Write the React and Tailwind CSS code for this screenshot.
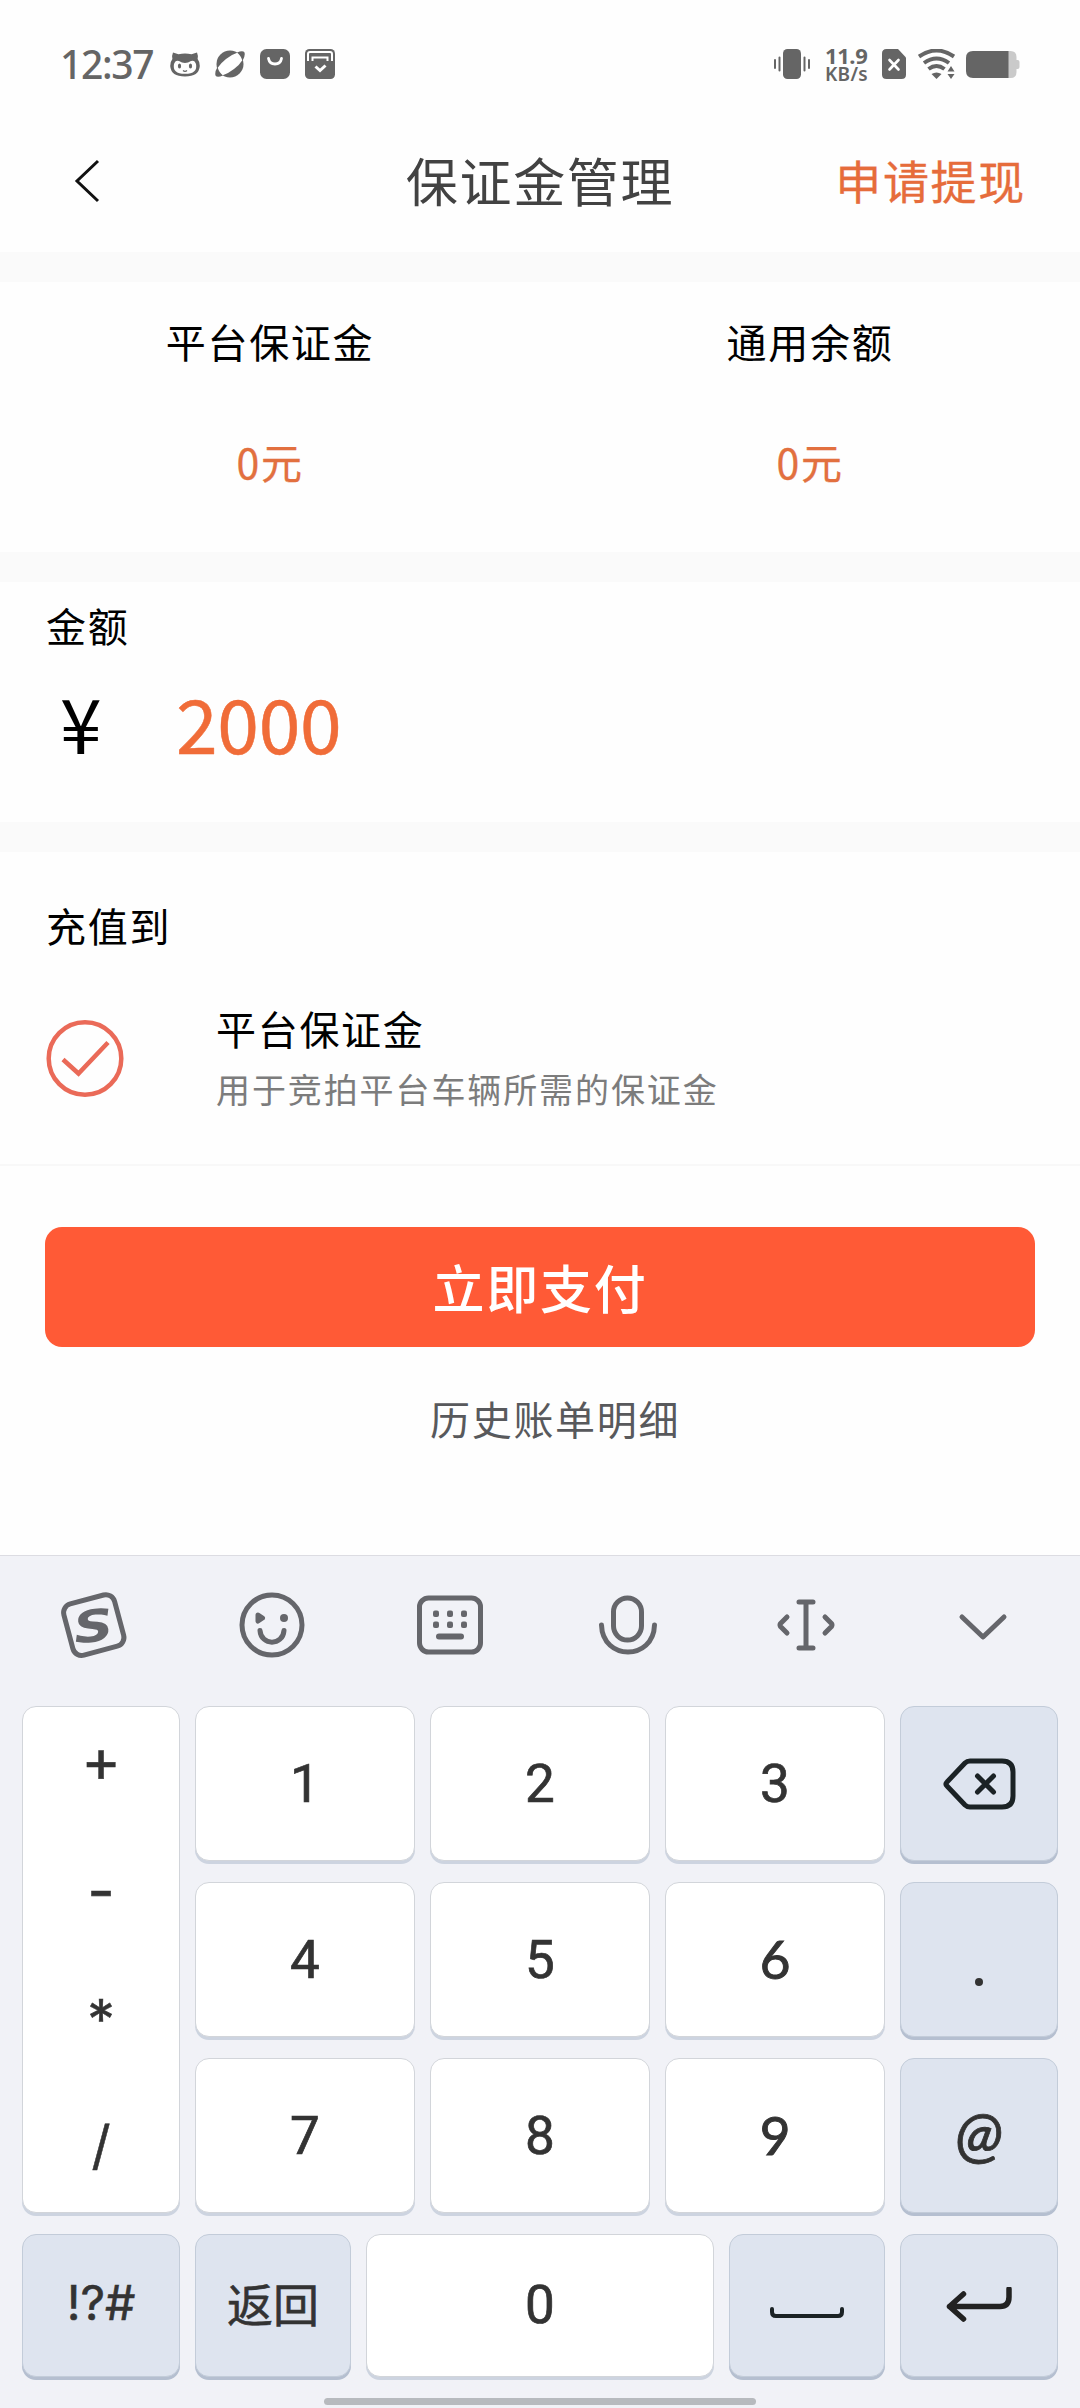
import { useState } from "react";

const balances = [
  { label: "平台保证金", value: "0元" },
  { label: "通用余额", value: "0元" },
];

const operators = [
  { label: "+", className: "text-[60px] pb-[18px]" },
  { label: "-", className: "text-[60px] pb-[8px]" },
  { label: "*", className: "text-[55px]" },
  { label: "/", className: "text-[53px] pt-[2px]" },
];

const StatusBar = () => (
  <div className="flex h-[128px] items-center justify-between pl-[60px] pr-[60px] text-[#656565]">
    <div className="flex items-center">
      <span className="w-[110px] pb-[2px] font-['Noto_Sans'] text-[39px] leading-none font-medium tracking-[-1.3px]">12:37</span>
      <svg width="30" height="30" viewBox="0 0 30 30" className="mr-[15px]">
        <path d="M3 3.5 8.500 5.200Q15 3.600 21.500 5.200L27 3.500Q28.500 7 27.600 10Q30 13 29.800 17Q29 27.500 15 27.500Q1 27.500 .2 17Q0 13 2.400 10Q1.500 7 3 3.500Z" fill="currentColor" />
        <path d="M4 15Q5.500 10.500 9 12Q15 16 21 12Q24.500 10.500 26 15Q28 24.800 15 24.800Q2 24.800 4 15Z" fill="#fff" />
        <ellipse cx="9.500" cy="17" rx="1.600" ry="2.600" fill="currentColor" />
        <ellipse cx="20.500" cy="17" rx="1.600" ry="2.600" fill="currentColor" />
        <path d="M13 21.500Q15 23.200 17 21.500" stroke="currentColor" strokeWidth="1.300" fill="none" />
      </svg>
      <svg width="30" height="30" viewBox="0 0 30 30" className="mr-[15px]">
        <circle cx="15" cy="15" r="13.500" fill="currentColor" />
        <ellipse cx="15" cy="15" rx="17" ry="6.500" transform="rotate(-38 15 15)" fill="#fff" />
        <path d="M22 3.500Q28 1 29.500 3.500Q30.500 7 27.500 12Q26 6.500 22 3.500ZM8 26.500Q2 29 .500 26.500Q-.5 23 2.500 18Q4 23.500 8 26.500Z" fill="currentColor" />
      </svg>
      <svg width="30" height="30" viewBox="0 0 30 30" className="mr-[15px]">
        <rect width="30" height="30" rx="6.500" fill="currentColor" />
        <path d="M8.500 9.500Q9.500 15 15 15Q20.500 15 21.500 9.500" stroke="#fff" strokeWidth="2.800" strokeLinecap="round" fill="none" />
      </svg>
      <svg width="30" height="30" viewBox="0 0 30 30">
        <rect width="30" height="30" rx="4.500" fill="currentColor" />
        <path d="M3 12V5Q3 3 5 3H25Q27 3 27 5V12" stroke="#fff" strokeWidth="2" fill="none" />
        <path d="M7.500 12V8.500H22.500V12" stroke="#fff" strokeWidth="2" fill="none" />
        <path d="m10.500 17.500 4.500 4 5.500-5" stroke="#fff" strokeWidth="3" fill="none" />
      </svg>
    </div>

    <div className="flex items-center">
      <svg width="36" height="30" viewBox="0 0 36 30" className="mr-[15px]">
        <rect x="9" width="18" height="30" rx="4.500" fill="currentColor" />
        <path d="M1 11v8M5.500 8.500v13M30.500 8.500v13M35 11v8" stroke="currentColor" strokeWidth="2" strokeLinecap="round" />
      </svg>
      <div className="flex w-[57px] flex-col font-['Noto_Sans']">
        <span className="text-[22px] leading-[20px] font-bold tracking-[-0.4px]">11.9</span>
        <span className="text-[19px] leading-[19px] font-semibold tracking-[0.3px]">KB/s</span>
      </div>
      <svg width="24" height="30" viewBox="0 0 24 30" className="mr-[12px]">
        <path d="M4.500 0H16L24 8.500V25.500Q24 30 19.500 30H4.500Q0 30 0 25.500V4.500Q0 0 4.500 0Z" fill="currentColor" />
        <path d="m7.500 11 9 9.500M16.500 11l-9 9.500" stroke="#fff" strokeWidth="2.600" strokeLinecap="round" />
      </svg>
      <svg width="38" height="30" viewBox="0 0 38 30" className="mr-[10px]">
        <path d="M1 7.500Q18.500-4.500 36 7.500M6 14Q18.500 5 31 14M10.500 20Q18.500 14 26.500 20" stroke="currentColor" strokeWidth="4" fill="none" />
        <path d="M13.500 25Q18.500 22 23.500 25L18.500 30Z" fill="currentColor" />
        <path d="m29.500 22.500 3.500-5.500 3.500 5.500ZM29.500 25l3.500 5 3.500-5Z" fill="currentColor" />
      </svg>
      <svg width="54" height="27" viewBox="0 0 54 27">
        <path d="M40 0h4.500q6 0 6 6v15q0 6-6 6H40ZM50 9h1.500q2 0 2 2v5q0 2-2 2H50Z" fill="#cacaca" />
        <path d="M7 0H42.500V27H7Q0 27 0 20V7Q0 0 7 0Z" fill="currentColor" />
      </svg>
    </div>
  </div>
);

const Key = ({ gray, className = "", children, onClick }) => (
  <button
    onClick={onClick}
    className={`flex items-center justify-center rounded-[14px] border font-['Roboto','Noto_Sans_CJK_SC',sans-serif] text-[53px] leading-none tracking-normal text-[#333] ${
      gray
        ? "border-[#c3ccd9] bg-[#dee4ef] shadow-[0_3px_0_#b5bfd0]"
        : "border-[#d2d5da] bg-white shadow-[0_3px_0_#cdd4e0]"
    } ${className}`}
  >
    {children}
  </button>
);

const KeyboardToolbar = () => (
  <div className="flex h-[138px] pr-[7px] pl-[5px] text-[#65666b] *:flex *:flex-1 *:items-center *:justify-center">
    <div>
      <svg width="70" height="70" viewBox="0 0 70 70" fill="none">
        <rect x="8.500" y="8.500" width="52.500" height="53" rx="9" transform="rotate(-15 35 35)" stroke="currentColor" strokeWidth="5" />
        <text x="0" y="0" textAnchor="middle" transform="translate(36 51.500) rotate(-6) scale(1.250 1)" fill="currentColor" className="font-['DejaVu_Sans'] text-[44px] font-bold tracking-normal italic">S</text>
      </svg>
    </div>
    <div>
      <svg width="70" height="70" viewBox="0 0 70 70" fill="none" stroke="currentColor" strokeWidth="5" strokeLinecap="round" strokeLinejoin="round">
        <circle cx="35" cy="35" r="30" />
        <path d="M23 40.500C24 56 46 56 47 40.500" />
        <path d="m21 25 4.500 3-4.500 3Z" />
        <circle cx="47" cy="28" r="4" fill="currentColor" stroke="none" />
      </svg>
    </div>
    <div>
      <svg width="70" height="70" viewBox="0 0 70 70" fill="none">
        <rect x="4.500" y="8" width="61" height="54" rx="9" stroke="currentColor" strokeWidth="5" />
        <g fill="currentColor">
          <rect x="18" y="20.500" width="6" height="6.500" rx="2" />
          <rect x="32" y="20.500" width="6" height="6.500" rx="2" />
          <rect x="46" y="20.500" width="6" height="6.500" rx="2" />
          <rect x="18" y="31.500" width="6" height="6.500" rx="2" />
          <rect x="32" y="31.500" width="6" height="6.500" rx="2" />
          <rect x="46" y="31.500" width="6" height="6.500" rx="2" />
          <rect x="21" y="43.500" width="28" height="6" rx="3" />
        </g>
      </svg>
    </div>
    <div>
      <svg width="70" height="70" viewBox="0 0 70 70" fill="none" stroke="currentColor" strokeWidth="5" strokeLinecap="round">
        <rect x="20.500" y="8" width="28" height="42" rx="14" />
        <path d="M8.500 35C9.500 71 60.500 71 61.500 35" />
      </svg>
    </div>
    <div>
      <svg width="70" height="70" viewBox="0 0 70 70" fill="none" stroke="currentColor" strokeWidth="5" strokeLinecap="round" strokeLinejoin="round">
        <path d="M28 12h14M35 12v46M28 58h14M16 27l-6.500 6.500q-1 1.500 0 3L16 43M54 27l6.500 6.500q1 1.500 0 3L54 43" />
      </svg>
    </div>
    <div>
      <svg width="70" height="70" viewBox="0 0 70 70" fill="none" stroke="currentColor" strokeWidth="5" strokeLinecap="round" strokeLinejoin="round">
        <path d="m13 27 21 20 21-20" />
      </svg>
    </div>
  </div>
);

const Keyboard = ({ onInput, onDelete }) => {
  const digit = (n) => (
    <Key key={n} onClick={() => onInput(n)}>
      <span
        className={
          n === "6" || n === "9"
            ? "pb-[2px] font-['Lato'] [-webkit-text-stroke:1px]"
            : "pt-[2px] [-webkit-text-stroke:0.7px]"
        }
      >
        {n}
      </span>
    </Key>
  );

  return (
    <div className="flex h-[853px] flex-col border-t border-[#dcdce2] bg-[#f1f2f7]">
      <KeyboardToolbar />
      <div className="mt-[12px] grid grid-cols-[158px_220px_220px_220px_158px] grid-rows-[155px_155px_155px] gap-x-[15px] gap-y-[21px] px-[22px]">
        <Key className="row-span-3">
          <div className="-mt-[6px] grid h-[500px] grid-rows-4 font-['Inter'] [-webkit-text-stroke:0.5px]">
            {operators.map((op) => (
              <span key={op.label} className={`flex items-center justify-center ${op.className}`}>{op.label}</span>
            ))}
          </div>
        </Key>
        {["1", "2", "3"].map(digit)}
        <Key gray onClick={onDelete}>
          <svg width="74" height="54" viewBox="0 0 74 54" fill="none" stroke="#1b2225" strokeWidth="5" strokeLinecap="round" strokeLinejoin="round">
            <path d="M28 4H60Q71 4 71 15V39Q71 50 60 50H28Q25 50 23 48L5 29Q3 27 5 25L23 6Q25 4 28 4Z" />
            <path d="m35.500 19 16 16M51.500 19l-16 16" />
          </svg>
        </Key>
        {["4", "5", "6"].map(digit)}
        <Key gray onClick={() => onInput(".")}>
          <span className="mt-[44px] size-[8px] rounded-full bg-[#333]" />
        </Key>
        {["7", "8", "9"].map(digit)}
        <Key gray>
          <span className="pb-[6px] font-['Lato'] text-[62px] font-medium italic [-webkit-text-stroke:0.8px]">@</span>
        </Key>
      </div>
      <div className="mt-[21px] flex h-[143px] gap-[15px] px-[22px]">
        <Key gray className="w-[158px] pb-[6px]">
          <span className="font-['Inter'] text-[48px] font-normal [-webkit-text-stroke:0.6px]">!?#</span>
        </Key>
        <Key gray className="w-[156px]">
          <span className="text-[46px] [-webkit-text-stroke:0.6px]">返回</span>
        </Key>
        <Key className="w-[348px]" onClick={() => onInput("0")}>
          <span className="pb-[1px] [-webkit-text-stroke:0.7px]">0</span>
        </Key>
        <Key gray className="w-[156px]">
          <svg width="76" height="14" viewBox="0 0 76 14" fill="none" className="mt-[14px]">
            <path d="M3 3v3q0 4 4 4H69q4 0 4-4V3" stroke="#1b2225" strokeWidth="4" strokeLinecap="round" />
          </svg>
        </Key>
        <Key gray className="w-[158px]">
          <svg width="68" height="38" viewBox="0 0 68 38" fill="none" stroke="#222" strokeWidth="5.500" strokeLinecap="round" strokeLinejoin="round">
            <path d="M64 2V10Q64 19.500 55 19.500H4.500M18.500 7 4.500 19.500l14 12.500" />
          </svg>
        </Key>
      </div>
      <div className="mx-auto mt-[21px] h-[7px] w-[432px] rounded-full bg-[#b7babe]" />
    </div>
  );
};

const App = () => {
  const [amount, setAmount] = useState("2000");

  return (
    <div className="flex h-[2408px] w-[1080px] flex-col overflow-hidden bg-[#fefefe] font-['Noto_Sans_CJK_SC',sans-serif] text-[40px] leading-[60px] tracking-[1.7px] text-black">
      <StatusBar />

      <header className="flex h-[124px] items-center pb-[21px]">
        <div className="w-[300px] pl-[73px]">
          <svg width="28" height="46" viewBox="0 0 28 46" fill="none" className="mt-[3px]">
            <path d="M25 3 4 23 25 43" stroke="#111" strokeWidth="3" />
          </svg>
        </div>
        <h1 className="flex-1 text-center text-[52px] text-[#424242]">保证金管理</h1>
        <button className="w-[300px] pr-[54px] pb-[2px] text-right text-[46px] text-[#e66c3b] [-webkit-text-stroke:0.3px]">申请提现</button>
      </header>

      <div className="h-[30px] bg-[#fafafa]" />

      <section className="grid h-[270px] grid-cols-2">
        {balances.map((item) => (
          <div key={item.label} className="flex flex-col items-center pt-[29px]">
            <span>{item.label}</span>
            <span className="mt-[60px] text-[41px] text-[#e2703f] [-webkit-text-stroke:0.3px]">{item.value}</span>
          </div>
        ))}
      </section>

      <div className="h-[30px] bg-[#fafafa]" />

      <section className="h-[240px] px-[46px] pt-[13px]">
        <p>金额</p>
        <div className="mt-[23px] flex h-[88px] items-center text-[75px] tracking-[-0.3px]">
          <span className="w-[130px] pl-[14px]">¥</span>
          <span className="text-[#f06c38] [-webkit-text-stroke:0.5px]">{amount}</span>
        </div>
      </section>

      <div className="h-[30px] bg-[#fafafa]" />

      <section className="h-[314px] border-b-2 border-[#f8f8f8] px-[46px] pt-[43px]">
        <p>充值到</p>
        <div className="mt-[43px] flex items-center">
          <svg width="78" height="80" viewBox="1 0 78 80" fill="none" stroke="#ea6a58" strokeWidth="4.500">
            <circle cx="40" cy="40.500" r="36.300" />
            <path d="m18 41.500 15.500 14L63 24.500" />
          </svg>
          <div className="ml-[92px] flex flex-col">
            <span>平台保证金</span>
            <span className="pt-[1px] text-[34px] leading-[59px] tracking-[1.9px] text-[#7c7c7c]">用于竞拍平台车辆所需的保证金</span>
          </div>
        </div>
      </section>

      <div className="flex h-[389px] flex-col px-[45px] pt-[61px]">
        <button className="h-[120px] rounded-[17px] bg-[#ff5a36] text-[52px] font-medium text-white">立即支付</button>
        <a className="mt-[41px] ml-[385px] text-[#58595c]">历史账单明细</a>
      </div>

      <Keyboard
        onInput={(key) => setAmount(amount + key)}
        onDelete={() => setAmount(amount.slice(0, -1))}
      />
    </div>
  );
};

export default App;
